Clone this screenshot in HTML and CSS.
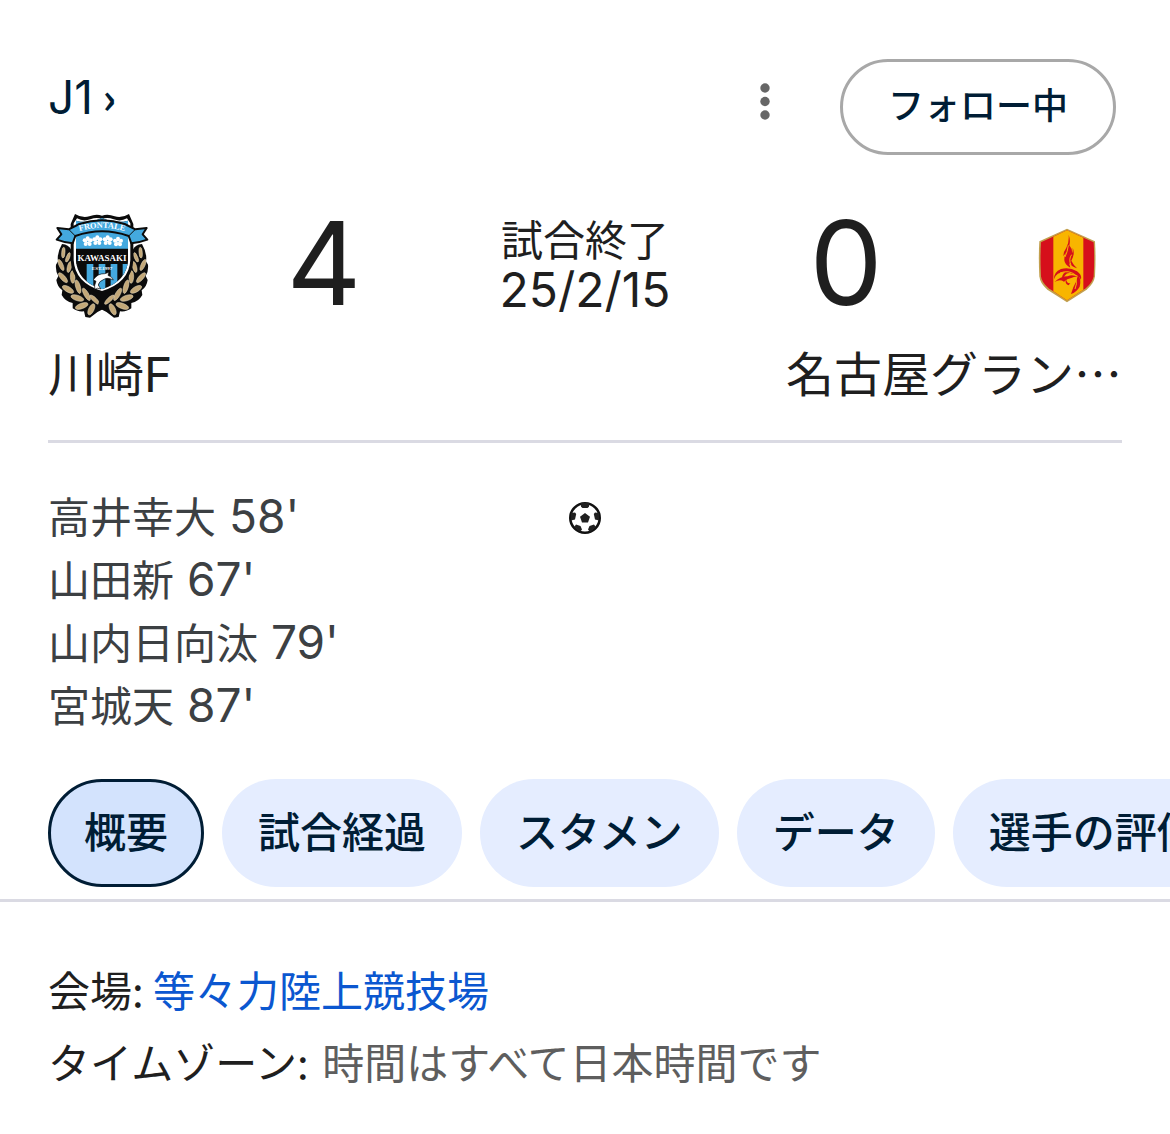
FILE: index.html
```
<!doctype html>
<html lang="ja">
<head>
<meta charset="utf-8">
<meta name="viewport" content="width=device-width, initial-scale=1">
<title>川崎F 4 - 0 名古屋グランパス</title>
<link rel="stylesheet" href="styles.css">
</head>
<body>
	<header class="head">
		<a href="#" class="league"><span class="num">J1</span> <span class="arrow">›</span></a>
		<button type="button" class="more" aria-label="その他">
			<svg viewBox="0 0 12 38" width="12" height="38"><circle cx="6" cy="6" r="4.7"/><circle cx="6" cy="19.5" r="4.7"/><circle cx="6" cy="33" r="4.7"/></svg>
		</button>
		<button type="button" class="follow">フォロー中</button>
	</header>

	<section class="match">
		<div class="score">
			<svg class="logo" viewBox="24 36 324 324">
				<defs>
					<g id="laurel">
						<path fill="#0b0b0b" d="M66 132Q86 134 94 150L108 210Q130 262 186 276L200 322Q172 334 150 353L136 351L132 334Q112 336 98 325V309Q76 305 65 285L67 271Q52 261 49 240L55 228Q46 214 48 194L54 184Q50 160 66 132Z"/>
						<g fill="#c3a878" stroke="#eadfc4" stroke-width="1.5">
							<ellipse cx="70" cy="158" rx="5" ry="16" transform="rotate(4 70 158)"/>
							<ellipse cx="84" cy="172" rx="5" ry="15" transform="rotate(22 84 172)"/>
							<ellipse cx="63" cy="195" rx="6" ry="18" transform="rotate(-24 63 195)"/>
							<ellipse cx="88" cy="201" rx="6" ry="17" transform="rotate(14 88 201)"/>
							<ellipse cx="69" cy="233" rx="7" ry="19" transform="rotate(-42 69 233)"/>
							<ellipse cx="98" cy="231" rx="7" ry="19" transform="rotate(-2 98 231)"/>
							<ellipse cx="84" cy="268" rx="8" ry="19" transform="rotate(-60 84 268)"/>
							<ellipse cx="114" cy="260" rx="7" ry="21" transform="rotate(-16 114 260)"/>
							<ellipse cx="112" cy="294" rx="8" ry="20" transform="rotate(-72 112 294)"/>
							<ellipse cx="139" cy="283" rx="7" ry="21" transform="rotate(-30 139 283)"/>
							<ellipse cx="125" cy="318" rx="8" ry="20" transform="rotate(70 125 318)"/>
							<ellipse cx="164" cy="299" rx="6" ry="19" transform="rotate(-46 164 299)"/>
							<ellipse cx="154" cy="328" rx="8" ry="18" transform="rotate(26 154 328)"/>
						</g>
					</g>
					<clipPath id="shield"><path d="M108 62Q144 72 186 54Q228 72 264 62V178Q262 244 186 268Q110 244 108 178Z"/></clipPath>
					<path id="arc" d="M112 95Q186 72 260 95"/>
					<g id="flower">
						<circle cy="-9" r="6"/><circle cx="9" cy="-3" r="6"/><circle cx="6" cy="8" r="6"/><circle cx="-6" cy="8" r="6"/><circle cx="-9" cy="-3" r="6"/><circle r="6"/>
					</g>
				</defs>
				<use href="#laurel"/>
				<use href="#laurel" transform="translate(372 0) scale(-1 1)"/>
				<path fill="#0b0b0b" d="M92 72L105 42Q128 56 148 49Q168 41 186 47Q204 41 224 49Q244 56 267 42L280 72V180Q276 256 186 282Q96 256 92 180Z"/>
				<path fill="#fff" d="M101 70L111 55Q130 66 151 58Q170 51 186 57Q202 51 221 58Q242 66 261 55L271 70V180Q268 248 186 273Q104 248 101 180Z"/>
				<g clip-path="url(#shield)">
					<path fill="#0b0b0b" d="M100 40H272V280H100Z"/>
					<path fill="#44a9df" d="M100 40H272V146H100ZM140 192H160V280H140ZM176 192H196V280H176ZM212 192H232V280H212ZM248 192H266V280H248Z"/>
					<path fill="#0b0b0b" d="M100 147H272V192H100Z"/>
				</g>
				<g fill="#fff"><use href="#flower" x="143" y="124"/><use href="#flower" x="172" y="121"/><use href="#flower" x="203" y="121"/><use href="#flower" x="234" y="125"/></g>
				<g fill="#44a9df"><circle cx="143" cy="124" r="2"/><circle cx="172" cy="121" r="2"/><circle cx="203" cy="121" r="2"/><circle cx="234" cy="125" r="2"/></g>
				<path fill="#fff" stroke="#0b0b0b" stroke-width="2" d="M160 239Q173 220 194 221L207 217L204 226Q218 231 220 240Q202 231 192 238Q176 244 175 255L182 267Q172 262 164 268Q162 256 168 244Z"/>
				<path fill="#44a9df" stroke="#0b0b0b" stroke-width="6" stroke-linejoin="round" d="M118 72Q186 50 254 72L286 88L320 84L308 103L322 119Q298 128 274 130L266 108Q186 80 106 108L98 130Q74 128 50 119L64 103L52 84L86 88Z"/>
				<path fill="none" stroke="#0b0b0b" stroke-width="3" d="M86 88L106 108M286 88L266 108"/>
				<text class="logo-text" font-size="25"><textPath href="#arc" startOffset="50%" text-anchor="middle">FRONTALE</textPath></text>
				<text class="logo-text" x="186" y="182" font-size="27" text-anchor="middle">KAWASAKI</text>
				<text class="logo-text" x="186" y="209" font-size="15" text-anchor="middle">EST.1997</text>
			</svg>
			<span class="point">4</span>
			<div class="status">
				<div>試合終了</div>
				<div class="date">25/2/15</div>
			</div>
			<span class="point">0</span>
			<svg class="logo" viewBox="-18 -9 324 324">
				<path fill="#c2a04e" d="M141 41L225 79Q228 130 225 184Q222 206 200 224L141 262L82 224Q60 206 58 184Q55 130 58 79Z"/>
				<path fill="#d60f1b" d="M141 46L221 82Q224 130 221 184Q218 203 197 220L141 256L86 220Q65 203 63 184Q60 130 63 82Z"/>
				<path fill="#f8b500" d="M100 65L141 46L190 68V224L141 256L100 229Z"/>
				<g fill="#d60f1b">
					<path d="M146 59Q152 76 148 91Q158 103 156 115Q159 111 158 98Q166 116 154 137Q160 149 171 160Q154 154 147 144L151 158Q134 149 133 136Q132 121 143 105Q136 117 130 123Q131 108 139 98Q148 83 146 59Z"/>
					<path d="M102 193Q101 171 123 162Q148 155 171 169Q187 180 183 194Q176 179 157 176Q142 171 136 180L127 191Q124 180 136 171Q108 171 102 193Z"/>
					<path d="M104 201Q120 184 143 184Q158 176 174 187Q166 183 156 188Q140 191 132 200Q119 191 104 201Z"/>
					<path d="M174 181Q185 194 179 215Q170 231 153 237Q157 226 160 217Q169 202 174 181ZM138 193Q142 208 151 204L146 211Q134 208 138 193Z"/>
				</g>
				<path fill="none" stroke="#f8b500" stroke-width="3" d="M145 91Q142 112 135 126M155 119Q145 132 153 151M120 174Q146 164 165 179M168 190Q172 207 165 222"/>
			</svg>
		</div>
		<div class="teams">
			<span>川崎<span class="latin">F</span></span>
			<span>名古屋グラン…</span>
		</div>
	</section>

	<section class="goals">
		<ul>
			<li>高井幸大<span class="num"> 58'</span></li>
			<li>山田新<span class="num"> 67'</span></li>
			<li>山内日向汰<span class="num"> 79'</span></li>
			<li>宮城天<span class="num"> 87'</span></li>
		</ul>
		<svg class="ball" viewBox="0 0 32 32">
			<circle cx="16" cy="16" r="14.7" fill="#fff" stroke="#111" stroke-width="2.6"/>
			<path fill="#202020" d="M16 11L21 14.7L19 20.4H13L11 14.7ZM12 1H20V4.8L18.5 6H13.5L12 4.8ZM2 11L6 10.5L7.2 12L6 17.5L2 18.5ZM30 11L26 10.5L24.8 12L26 17.5L30 18.5ZM5.2 25L7 22.6L11.5 24L13 27.5L11 30ZM26.8 25L25 22.6L20.5 24L19 27.5L21 30Z"/>
		</svg>
		<div></div>
	</section>

	<nav class="tabs">
		<button type="button" class="tab active">概要</button>
		<button type="button" class="tab">試合経過</button>
		<button type="button" class="tab">スタメン</button>
		<button type="button" class="tab">データ</button>
		<button type="button" class="tab">選手の評価</button>
	</nav>

	<section class="info">
		<p>会場: <a href="#">等々力陸上競技場</a></p>
		<p>タイムゾーン: <span class="zone">時間はすべて日本時間です</span></p>
	</section>
</body>
</html>
```
FILE: styles.css
```
* {
	box-sizing: border-box;
}
body {
	margin: 0;
	background: #fff;
	color: #1f1f1f;
	font-family: "Noto Sans CJK JP", sans-serif;
	font-size: 42px;
	line-height: 54px;
}
a {
	text-decoration: none;
}
button {
	font-family: inherit;
	font-weight: 500;
	color: #001d35;
	cursor: pointer;
}
.num, .latin, .date, .point {
	font-family: Inter, sans-serif;
}
.num {
	font-size: 46px;
	line-height: 1;
}

/* header */
.head {
	display: flex;
	align-items: center;
	padding: 59px 54px 0 48px;
}
.league {
	margin-right: auto;
	padding-bottom: 22px;
	color: #001d35;
}
.arrow {
	font-weight: 700;
}
.more {
	display: flex;
	margin-right: 60px;
	padding: 0 9px 12px;
	border: 0;
	background: none;
}
.more svg {
	fill: #666;
}
.follow {
	height: 96px;
	padding: 0 45px 8px;
	border: 3px solid #a8a8a8;
	border-radius: 48px;
	background: #fff;
	font-size: 36px;
}

/* score */
.match {
	margin: 0 48px;
	padding: 57px 0 29px;
	border-bottom: 3px solid #dadae3;
}
.score {
	display: grid;
	grid-template-columns: 108px 1fr 186px 1fr 108px;
	align-items: center;
	text-align: center;
}
.logo {
	display: block;
	width: 108px;
	height: 108px;
}
.logo-text {
	fill: #fff;
	font-family: "Liberation Serif", serif;
	font-weight: bold;
}
.point {
	padding-bottom: 6px;
	font-size: 116px;
	line-height: 102px;
}
.status {
	padding-bottom: 4px;
	line-height: 52px;
	white-space: nowrap;
}
.date {
	font-size: 48px;
}
.teams {
	display: flex;
	justify-content: space-between;
	padding-top: 15px;
	font-size: 48px;
	line-height: 72px;
}

/* goals */
.goals {
	display: grid;
	grid-template-columns: 1fr 32px 1fr;
	padding: 40px 48px 44px;
	color: #3c4043;
	line-height: 63px;
}
.goals ul {
	margin: 0;
	padding: 0;
	list-style: none;
	white-space: nowrap;
}
.ball {
	width: 32px;
	height: 32px;
	margin-top: 19px;
}

/* tabs */
.tabs {
	display: flex;
	gap: 18px;
	padding: 0 0 12px 48px;
	border-bottom: 3px solid #dadae3;
	overflow: hidden;
}
.tab {
	flex: none;
	height: 108px;
	padding: 0 36px 8px;
	border: 0;
	border-radius: 54px;
	background: #e5edff;
	font-size: 42px;
}
.tab.active {
	padding: 0 33px 8px;
	border: 3px solid #001d35;
	background: #d3e3fd;
}

/* info */
.info {
	padding: 51px 48px;
	line-height: 72px;
}
.info p {
	margin: 0;
}
.info a {
	color: #0b57d0;
}
.zone {
	margin-left: 4px;
	color: #5e5e5e;
}
```
